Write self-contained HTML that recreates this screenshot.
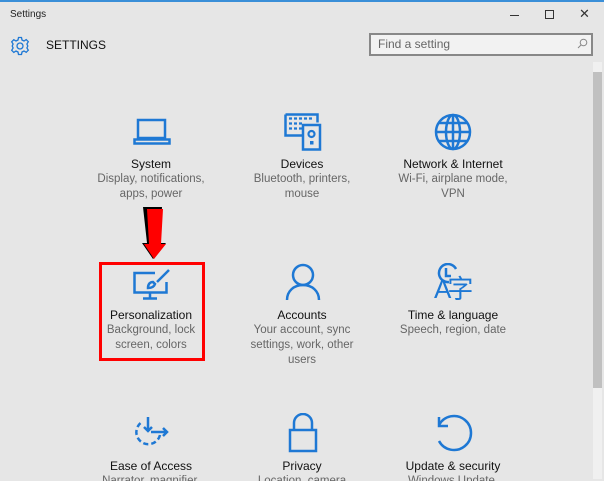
<!DOCTYPE html>
<html><head><meta charset="utf-8"><style>
*{margin:0;padding:0;box-sizing:border-box}
html,body{width:604px;height:481px;overflow:hidden}
body{background:#e6e6e6;font-family:"Liberation Sans",Arial,sans-serif;position:relative}
.abs{position:absolute}
.item{position:absolute;width:150px;text-align:center}
.item .t{font-size:12px;color:#111;line-height:15px}
.item .s{font-size:11.5px;color:#666;line-height:15px}
svg{position:absolute}
</style></head><body>
<div class="abs" style="left:0;top:0;width:604px;height:2px;background:#3a8fd8"></div>
<div class="abs" style="left:10px;top:9px;font-size:10px;color:#222">Settings</div>
<div class="abs" style="left:510px;top:15px;width:9px;height:1px;background:#333"></div>
<div class="abs" style="left:545px;top:10px;width:9px;height:9px;border:1px solid #333"></div>
<div class="abs" style="left:579px;top:6px;font-size:13px;color:#333">✕</div>
<svg style="left:10px;top:36px" width="20" height="20" viewBox="0 0 20 20"><path d="M8.5 1.5h3l.5 2.5 2 1 2.2-1.4 2.1 2.1L16.9 8l.9 2-.9 2 1.4 2.2-2.1 2.1L14 15l-2 1-.5 2.5h-3L8 16l-2-1-2.2 1.4-2.1-2.1L3.1 12l-.9-2 .9-2L1.7 5.8l2.1-2.1L6 5l2-1z" fill="none" stroke="#1e78d4" stroke-width="1.3"/><circle cx="10" cy="10" r="3" fill="none" stroke="#1e78d4" stroke-width="1.3"/></svg>
<div class="abs" style="left:46px;top:38px;font-size:12px;color:#111">SETTINGS</div>
<div class="abs" style="left:369px;top:33px;width:224px;height:23px;border:2px solid #888;background:#f2f2f2;font-size:12px;color:#666;padding:2px 0 0 7px">Find a setting</div>
<svg style="left:577px;top:38px" width="11" height="11" viewBox="0 0 11 11"><circle cx="6.5" cy="4.5" r="3.3" fill="none" stroke="#888"/><path d="M4 7L1 10" stroke="#888"/></svg>
<div class="abs" style="left:593px;top:62px;width:9px;height:417px;background:#f0f0f0"></div>
<div class="abs" style="left:593px;top:72px;width:9px;height:316px;background:#c0c0c0"></div>

<svg style="left:133px;top:118px" width="38" height="28" viewBox="0 0 38 28"><g fill="none" stroke="#1e78d4" stroke-width="2.5"><rect x="5" y="2" width="27" height="18"/><path d="M1.5 25.5h35v-4h-35z"/></g></svg>
<svg style="left:284px;top:113px" width="38" height="38" viewBox="0 0 38 38"><path d="M1.5 1.5h32v8M1.5 1.5v21h17" fill="none" stroke="#1e78d4" stroke-width="2.5"/><rect x="19" y="12" width="17" height="24.5" fill="none" stroke="#1e78d4" stroke-width="2.5"/><circle cx="27.5" cy="21" r="3" fill="none" stroke="#1e78d4" stroke-width="2.2"/><rect x="26" y="28" width="3.5" height="3.5" fill="#1e78d4"/><path d="M5 5.5h3M10 5.5h3M15 5.5h3M20 5.5h3M25 5.5h3M5 10.5h3M10 10.5h3M15 10.5h3M5 15.5h3M10 15.5h3M15 15.5h3" stroke="#1e78d4" stroke-width="2.2"/></svg>
<svg style="left:434px;top:113px" width="38" height="38" viewBox="0 0 38 38"><g fill="none" stroke="#1e78d4" stroke-width="2.5"><circle cx="19" cy="19" r="17"/><ellipse cx="19" cy="19" rx="7" ry="17"/><path d="M2 19h34M5 10h28M5 28h28M19 2v34"/></g></svg>
<div class="item" style="left:76px;top:157px"><div class="t">System</div><div class="s">Display, notifications,<br>apps, power</div></div>
<div class="item" style="left:227px;top:157px"><div class="t">Devices</div><div class="s">Bluetooth, printers,<br>mouse</div></div>
<div class="item" style="left:378px;top:157px"><div class="t">Network &amp; Internet</div><div class="s">Wi-Fi, airplane mode,<br>VPN</div></div>

<svg style="left:140px;top:206px" width="28" height="54" viewBox="0 0 28 54"><path d="M3 1h19l-2 36h6l-13 16-11-16h5z" fill="#000"/><path d="M7 3h16l-2 35h5l-12 15-10-15h5z" fill="#f00"/></svg>
<div class="abs" style="left:99px;top:262px;width:106px;height:99px;border:3px solid #f00"></div>

<svg style="left:132px;top:268px" width="40" height="34" viewBox="0 0 40 34"><g fill="none" stroke="#1e78d4" stroke-width="2.5"><path d="M23 5H2.5v19.5h32V14"/><path d="M18 25v5M11 30.5h14"/><path d="M37 2L25 14"/><path d="M21 14c-3 0-5 2-5 6 3 0 6-1 7-4z"/></g></svg>
<svg style="left:285px;top:263px" width="36" height="38" viewBox="0 0 36 38"><g fill="none" stroke="#1e78d4" stroke-width="2.5"><circle cx="18" cy="12" r="10"/><path d="M2 37c0-9 7-15 16-15s16 6 16 15"/></g></svg>
<svg style="left:435px;top:263px" width="40" height="40" viewBox="0 0 40 40"><g fill="none" stroke="#1e78d4" stroke-width="2.5"><path d="M14 19A9 9 0 1 1 21 6"/><path d="M11 5v8h5"/></g></svg>
<div class="abs" style="left:434px;top:274px;font-family:'Liberation Sans','Noto Sans CJK SC',sans-serif;font-size:26px;line-height:30px;color:#1e78d4;letter-spacing:-4px">A字</div>
<div class="item" style="left:76px;top:308px"><div class="t">Personalization</div><div class="s">Background, lock<br>screen, colors</div></div>
<div class="item" style="left:227px;top:308px"><div class="t">Accounts</div><div class="s">Your account, sync<br>settings, work, other<br>users</div></div>
<div class="item" style="left:378px;top:308px"><div class="t">Time &amp; language</div><div class="s">Speech, region, date</div></div>

<svg style="left:132px;top:415px" width="40" height="36" viewBox="0 0 40 36"><g fill="none" stroke="#1e78d4" stroke-width="2.5"><path d="M28 20A12 12 0 1 1 10 7" stroke-dasharray="5 3"/><path d="M16 2v14M12 12l4 4 4-4M19 17h16M31 13l4 4-4 4"/></g></svg>
<svg style="left:287px;top:413px" width="32" height="40" viewBox="0 0 32 40"><g fill="none" stroke="#1e78d4" stroke-width="2.5"><path d="M7 17V10a9 9 0 0 1 18 0v7"/><rect x="3" y="17" width="26" height="21"/></g></svg>
<svg style="left:434px;top:413px" width="40" height="40" viewBox="0 0 40 40"><g fill="none" stroke="#1e78d4" stroke-width="2.5"><path d="M5 12A17 17 0 1 1 5 28"/><path d="M5 4v9h9"/></g></svg>
<div class="item" style="left:76px;top:459px"><div class="t">Ease of Access</div><div class="s">Narrator, magnifier,</div></div>
<div class="item" style="left:227px;top:459px"><div class="t">Privacy</div><div class="s">Location, camera</div></div>
<div class="item" style="left:378px;top:459px"><div class="t">Update &amp; security</div><div class="s">Windows Update,</div></div>
</body></html>
